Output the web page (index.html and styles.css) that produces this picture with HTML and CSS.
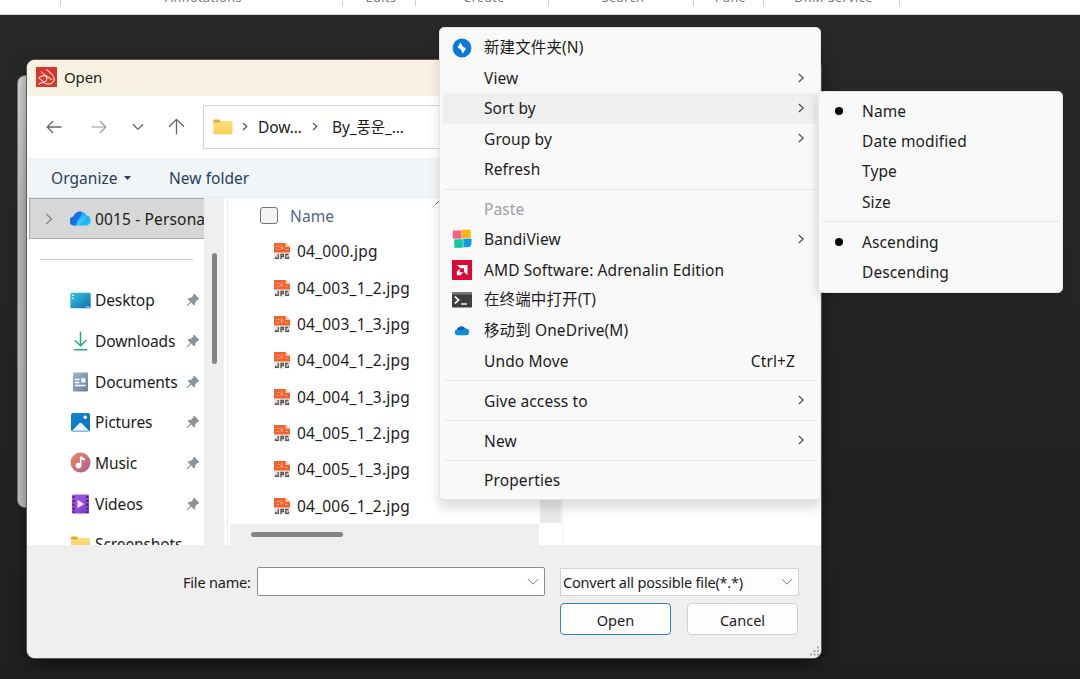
FILE: index.html
```html
<!DOCTYPE html>
<html lang="en">
<head>
<meta charset="utf-8">
<title>Open</title>
<link rel="stylesheet" href="styles.css">
</head>
<body>
<svg width="0" height="0" class="defs" aria-hidden="true">
  <defs>
    <linearGradient id="gFolder" x1="0" y1="0" x2="0" y2="1"><stop offset="0" stop-color="#ffdf82"/><stop offset="1" stop-color="#f8cb52"/></linearGradient>
    <linearGradient id="gDesk" x1="0" y1="0" x2="1" y2="1"><stop offset="0" stop-color="#34cdda"/><stop offset="1" stop-color="#1468b4"/></linearGradient>
    <linearGradient id="gDoc" x1="0" y1="0" x2="1" y2="1"><stop offset="0" stop-color="#a5b7c9"/><stop offset="1" stop-color="#62809e"/></linearGradient>
    <linearGradient id="gPic" x1="0" y1="0" x2="1" y2="1"><stop offset="0" stop-color="#1489d2"/><stop offset="1" stop-color="#0a6ebb"/></linearGradient>
    <linearGradient id="gMus" x1="0" y1="0" x2="1" y2="1"><stop offset="0" stop-color="#f08a55"/><stop offset="1" stop-color="#b0589c"/></linearGradient>
    <linearGradient id="gVid" x1="0" y1="0" x2="1" y2="1"><stop offset="0" stop-color="#a855ea"/><stop offset="1" stop-color="#7b3cc8"/></linearGradient>
    <linearGradient id="gCloud" x1="0" y1="0" x2="1" y2="1"><stop offset="0" stop-color="#2aa5f5"/><stop offset="1" stop-color="#16c0fb"/></linearGradient>
    <symbol id="pin" viewBox="0 0 14 14"><path d="M8.3.8 13.2 5.700 12.500 6.900 11.300 7 9.300 9.300 9.200 11.500 8 12.400 5.200 9.600 1.300 13.300.6 12.600 4.300 8.700 1.600 6 2.700 4.900 5 4.700 7.200 2.600 7.300 1.300Z" fill="#8c9499"/></symbol>
    <symbol id="chev" viewBox="0 0 8 10"><path d="M1.800 1 6.200 5 1.800 9" fill="none" stroke="#444" stroke-width="1.100"/></symbol>
    <symbol id="down" viewBox="0 0 12 8"><path d="M1.200 1.300 6 6.200 10.800 1.300" fill="none" stroke="#777" stroke-width="1"/></symbol>
    <symbol id="folder" viewBox="0 0 20 16"><path d="M.5 1.500Q.5.500 1.500.500H6L8 2.500H11V5H.5Z" fill="#e3a82c"/><path d="M.5 3.500H6L8 2H18.500Q19.500 2 19.500 3V14Q19.500 15.300 18.500 15.300H1.500Q.5 15.300.5 14Z" fill="url(#gFolder)"/></symbol>
    <symbol id="jpg" viewBox="0 0 18 18"><path d="M1 1H13L17 5V17.500H1Z" fill="#e9e7e6"/><path d="M1 1H12.500L17 5V10.500H1Z" fill="#f2642d"/><path d="M12.500 1V5H17Z" fill="#f9c4ad"/><path d="M3.500 4.500H7M8.500 3V8M7 6H11M12 7.500H15M3.500 7.500H6" stroke="#f99a74" stroke-width="1.200" fill="none"/><path d="M5.200 12V16.300H2.700V14.800M8 17.200V12.500H10.300V14.700H8M15.500 12.500H12.800V16.300H15.300V14.500" stroke="#54504f" stroke-width="1.300" fill="none"/></symbol>
  </defs>
</svg>

<header class="ribbon">
  <div class="group g0"></div>
  <div class="group g1">Annotations</div>
  <div class="group g2">Edits</div>
  <div class="group g3">Create</div>
  <div class="group g4">Search</div>
  <div class="group g5">Pane</div>
  <div class="group g6">DRM Service</div>
</header>

<main class="desktop">
  <div class="back-window"></div>

  <section class="dialog">
    <div class="titlebar">
      <svg width="21" height="20" viewBox="0 0 21 20"><rect width="21" height="20" fill="#d7372b"/><path d="M2.500 17.500C4.500 15 6 16 8.500 15C11.500 13.700 12 9.500 8.500 9C5.500 8.600 3 10 3 11.500C4.500 11.500 6.500 14.500 9 16.200C12 18 16.500 17 18 13.500C19.300 10 16 6.500 10.500 2.500M5 4.500C8 8.500 12.500 9.500 15.800 13" fill="none" stroke="#fbd3ca" stroke-width="1.200"/></svg>
      <span>Open</span>
    </div>

    <div class="nav">
      <svg class="back" width="16" height="14" viewBox="0 0 16 14"><path d="M15.500 7H1.200M7 1 1.200 7 7 13" fill="none" stroke="#666" stroke-width="1.300"/></svg>
      <svg class="fwd" width="16" height="14" viewBox="0 0 16 14"><path d="M.5 7H14.800M9 1 14.800 7 9 13" fill="none" stroke="#999" stroke-width="1.200"/></svg>
      <svg class="recent" width="12" height="8"><path d="M1 1.200 6 6.400 11 1.200" fill="none" stroke="#666" stroke-width="1.300"/></svg>
      <svg class="up" width="17" height="17" viewBox="0 0 17 17"><path d="M8.500 16.500V1.300M1 8.700 8.500 1.300 16 8.700" fill="none" stroke="#666" stroke-width="1.300"/></svg>
      <div class="address">
        <svg width="20" height="16"><use href="#folder"/></svg>
        <svg class="sep1" width="6" height="9"><path d="M1 1 4.800 4.500 1 8" fill="none" stroke="#555" stroke-width="1.200"/></svg>
        <span class="crumb1">Dow...</span>
        <svg class="sep2" width="6" height="9"><path d="M1 1 4.800 4.500 1 8" fill="none" stroke="#555" stroke-width="1.200"/></svg>
        <span class="crumb2">By_풍운_...</span>
      </div>
    </div>

    <div class="toolbar">
      <span class="organize">Organize</span>
      <svg width="7" height="4"><path d="M0 0H7L3.500 4Z" fill="#27405f"/></svg>
      <span class="newfolder">New folder</span>
    </div>

    <div class="content">
      <aside class="sidebar">
        <div class="account">
          <svg class="expand" width="8" height="12"><path d="M1.200 1 6.600 6 1.200 11" fill="none" stroke="#858585" stroke-width="1.300"/></svg>
          <svg width="21" height="15" viewBox="0 0 21 15"><path d="M4.500 14.500A4.500 4.500 0 0 1 3.500 5.500C4.500 2 7.500.4 10.500.4C13.500.4 15.800 2 16.600 4.600A5 5 0 0 1 16 14.500Z" fill="url(#gCloud)"/><path d="M4.500 14.500A4.500 4.500 0 0 1 3.500 5.500C4.500 2 7.500.4 10.500.4Q12 1.500 11.500 4Q10.500 6 8 8.500Q6 11 5.800 14.500Z" fill="#1d6fdc"/><path d="M7.500 14.500Q8 9 13.500 5.500L16.500 4.600Q14 10 9.500 14.500Z" fill="#63cdfb" opacity=".5"/></svg>
          <span>0015 - Persona</span>
        </div>
        <div class="rule"></div>
        <ul class="places">
          <li><svg class="ic" width="21" height="17" viewBox="0 0 21 17"><rect x=".3" y=".8" width="20.400" height="15.400" rx="1.500" fill="url(#gDesk)"/><path d="M2 3.300H4M2 6.300H4M16 14.800H17.500M18.300 14.800H19.500" stroke="#d9fbff" stroke-width="1.300"/></svg><span>Desktop</span><svg class="pin" width="14" height="14"><use href="#pin"/></svg></li>
          <li><svg class="ic" width="21" height="20" viewBox="0 0 21 20"><path d="M10.500 .8V14.500M4.800 9.300 10.500 14.800 16.200 9.300M4 18.700H17.300" fill="none" stroke="#23aa8d" stroke-width="1.500"/></svg><span>Downloads</span><svg class="pin" width="14" height="14"><use href="#pin"/></svg></li>
          <li><svg class="ic" width="21" height="20" viewBox="0 0 21 20"><rect x="3" y=".5" width="15" height="19" rx="1.300" fill="url(#gDoc)"/><path d="M5 7.500H9.500M5 10.500H9.500M5 13.500H15.500" stroke="#fff" stroke-width="1.300"/><rect x="11.300" y="6.300" width="4.200" height="4.200" fill="#fff"/></svg><span>Documents</span><svg class="pin" width="14" height="14"><use href="#pin"/></svg></li>
          <li><svg class="ic" width="21" height="20" viewBox="0 0 21 20"><rect x="1" y="1" width="19" height="18.500" rx="1.800" fill="url(#gPic)"/><path d="M2 18.800 9.300 11.300Q10.500 10.300 11.700 11.300L19 18.800Z" fill="#eef8ff"/><circle cx="15.200" cy="5.200" r="1.700" fill="#fff"/></svg><span>Pictures</span><svg class="pin" width="14" height="14"><use href="#pin"/></svg></li>
          <li><svg class="ic" width="21" height="21" viewBox="0 0 21 21"><circle cx="10.500" cy="10.500" r="10" fill="url(#gMus)"/><circle cx="8.500" cy="13.500" r="2.900" fill="#fff"/><path d="M9.900 13.500V4.500H11.300L15 6.500V8.700L11.400 7.600V13.500Z" fill="#fff"/></svg><span>Music</span><svg class="pin" width="14" height="14"><use href="#pin"/></svg></li>
          <li><svg class="ic" width="21" height="20" viewBox="0 0 21 20"><rect x="2" y=".5" width="17" height="19" rx="1.300" fill="url(#gVid)"/><path d="M3.700 2V19M17.300 2V19" stroke="#40217d" stroke-width="2" stroke-dasharray="2 1.900"/><path d="M7.500 5.800 14.200 10 7.500 14.200Z" fill="#f4e8ff"/></svg><span>Videos</span><svg class="pin" width="14" height="14"><use href="#pin"/></svg></li>
          <li><svg class="ic" width="21" height="16" viewBox="0 0 20 16"><use href="#folder"/></svg><span>Screenshots</span></li>
        </ul>
      </aside>
      <div class="vscroll"><div class="thumb"></div></div>
      <div class="files">
        <div class="file-head"><i class="check"></i><span>Name</span><svg class="sortmark" width="5" height="5"><path d="M.5 4.500 4.500.500" stroke="#555"/></svg></div>
        <ul class="file-list">
          <li><svg width="18" height="18"><use href="#jpg"/></svg><span>04_000.jpg</span></li>
          <li><svg width="18" height="18"><use href="#jpg"/></svg><span>04_003_1_2.jpg</span></li>
          <li><svg width="18" height="18"><use href="#jpg"/></svg><span>04_003_1_3.jpg</span></li>
          <li><svg width="18" height="18"><use href="#jpg"/></svg><span>04_004_1_2.jpg</span></li>
          <li><svg width="18" height="18"><use href="#jpg"/></svg><span>04_004_1_3.jpg</span></li>
          <li><svg width="18" height="18"><use href="#jpg"/></svg><span>04_005_1_2.jpg</span></li>
          <li><svg width="18" height="18"><use href="#jpg"/></svg><span>04_005_1_3.jpg</span></li>
          <li><svg width="18" height="18"><use href="#jpg"/></svg><span>04_006_1_2.jpg</span></li>
        </ul>
        <div class="hscroll"><div class="hthumb"></div></div>
      </div>
      <div class="list-scroll"></div>
      <div class="preview"></div>
    </div>

    <div class="footer">
      <div class="frow">
        <label>File name:</label>
        <div class="filename"><svg width="12" height="8"><use href="#down"/></svg></div>
        <div class="filter"><span>Convert all possible file(*.*)</span><svg width="12" height="8"><use href="#down"/></svg></div>
      </div>
      <div class="buttons">
        <div class="btn primary">Open</div>
        <div class="btn">Cancel</div>
      </div>
      <svg class="grip" width="10" height="10"><path d="M8 1.500h2M4.500 5h2M8 5h2M1 8.500h2M4.500 8.500h2M8 8.500h2" stroke="#aaa" stroke-width="2"/></svg>
    </div>
  </section>

  <nav class="menu context">
    <div class="item"><svg class="mi" width="20" height="20" viewBox="0 0 20 20"><circle cx="10" cy="10" r="9.400" fill="#0c79d8"/><path d="M8.500 4.200 5.700 9.500 8.900 11.500 10.800 15.800 14 10.500 10.800 8.500Z" fill="#fff"/></svg><span class="cjk">新建文件夹(N)</span></div>
    <div class="item"><i class="mi"></i><span>View</span><svg class="arrow" width="8" height="10"><use href="#chev"/></svg></div>
    <div class="item hover"><i class="mi"></i><span>Sort by</span><svg class="arrow" width="8" height="10"><use href="#chev"/></svg></div>
    <div class="item"><i class="mi"></i><span>Group by</span><svg class="arrow" width="8" height="10"><use href="#chev"/></svg></div>
    <div class="item"><i class="mi"></i><span>Refresh</span></div>
    <div class="divider"></div>
    <div class="item disabled"><i class="mi"></i><span>Paste</span></div>
    <div class="item"><svg class="mi" width="20" height="20" viewBox="0 0 20 20"><path d="M.8 1.500H9.500V9.700H.8Z" fill="#fb5e86"/><path d="M10 .7H18.700V9.300H10Z" fill="#fdb90b"/><path d="M2.300 10.300H10.800V18.800H2.300Z" fill="#12c99b"/><path d="M11.300 9.800H19.500V14Q19.500 18.300 15 18.300H11.300Z" fill="#1397e4"/></svg><span>BandiView</span><svg class="arrow" width="8" height="10"><use href="#chev"/></svg></div>
    <div class="item"><svg class="mi" width="20" height="20" viewBox="0 0 20 20"><rect width="20" height="20" fill="#d90a35"/><path d="M5 5H15.500V15.300L12 12V8.300H8.300ZM4.800 11.500 7.700 8.700V12.300H11.300L8.500 15.200H4.800Z" fill="#fff"/></svg><span>AMD Software: Adrenalin Edition</span></div>
    <div class="item"><svg class="mi" width="20" height="20" viewBox="0 0 20 20"><rect y="2" width="20" height="15.500" rx="1" fill="#3d3d3d"/><path d="M0 3Q0 2 1 2H19Q20 2 20 3V4.500H0Z" fill="#777"/><path d="M2.800 6.500 6.700 10 2.800 13.500M9 14H15" fill="none" stroke="#eee" stroke-width="1.700"/></svg><span class="cjk">在终端中打开(T)</span></div>
    <div class="item"><svg class="mi" width="20" height="20" viewBox="0 0 20 20"><path d="M5.500 14.300A3 3 0 0 1 5 8.400C6.300 5.300 10.800 4 13.400 7.600A3.400 3.400 0 0 1 14.500 14.300Z" fill="#128cdf"/><path d="M5 8.400C6.300 5.300 10.800 4 13.400 7.600L10 9.500Z" fill="#0863b5"/></svg><span class="cjk">移动到 OneDrive(M)</span></div>
    <div class="item"><i class="mi"></i><span>Undo Move</span><span class="key">Ctrl+Z</span></div>
    <div class="divider"></div>
    <div class="item"><i class="mi"></i><span>Give access to</span><svg class="arrow" width="8" height="10"><use href="#chev"/></svg></div>
    <div class="divider"></div>
    <div class="item"><i class="mi"></i><span>New</span><svg class="arrow" width="8" height="10"><use href="#chev"/></svg></div>
    <div class="divider"></div>
    <div class="item"><i class="mi"></i><span>Properties</span></div>
  </nav>

  <nav class="menu submenu">
    <div class="item"><i class="dot on"></i><span>Name</span></div>
    <div class="item"><i class="dot"></i><span>Date modified</span></div>
    <div class="item"><i class="dot"></i><span>Type</span></div>
    <div class="item"><i class="dot"></i><span>Size</span></div>
    <div class="divider"></div>
    <div class="item"><i class="dot on"></i><span>Ascending</span></div>
    <div class="item"><i class="dot"></i><span>Descending</span></div>
  </nav>
</main>
</body>
</html>
```
FILE: styles.css
```css
* { box-sizing: border-box; }
body {
  margin: 0; width: 1080px; height: 679px; overflow: hidden;
  display: flex; flex-direction: column;
  background: #272727; color: #1c1c1c;
  font: 15.500px/20px "Noto Sans", "Noto Sans CJK SC", "Noto Sans CJK KR", sans-serif;
  letter-spacing: -0.1px;
}
.defs { position: absolute; }
svg { display: block; flex: none; }
ul { list-style: none; margin: 0; padding: 0; }
span, label { white-space: nowrap; }

.ribbon {
  height: 15px; flex: none; display: flex; background: #fff; overflow: hidden;
  border-bottom: 1px solid #d6d6d6; font-size: 12.500px; line-height: 16px; color: #777; letter-spacing: 0.5px;
}
.group {
  height: 6px; border-right: 1px solid #cfcfcf; padding-left: 4px; white-space: nowrap;
  display: flex; justify-content: center; align-items: flex-end;
}
.g0 { width: 61px; } .g1 { width: 282px; } .g2 { width: 73px; } .g3 { width: 133px; }
.g4 { width: 145px; } .g5 { width: 70px; } .g6 { width: 136px; }

.desktop { flex: 1; position: relative; background: linear-gradient(#282828, #202020); }
.back-window {
  position: absolute; left: 17px; top: 60px; width: 40px; height: 433px;
  border-radius: 8px; background: linear-gradient(#dcdcdc, #c2c2c2 30%, #c4c4c4);
  border: 1px solid #777;
}
.dialog {
  position: absolute; left: 27px; top: 45px; width: 794px; height: 598px;
  display: flex; flex-direction: column; overflow: hidden;
  border-radius: 8px; background: #fff; box-shadow: 0 0 0 1px #5b5b5b, 0 6px 16px rgba(0,0,0,.5);
}
.titlebar {
  height: 36px; flex: none; display: flex; align-items: center; gap: 7px; padding: 0 0 2px 9px;
  background: linear-gradient(90deg, #f7f2e2, #faf0e6 50%, #faefe6);
}
.titlebar span { font-size: 15px; }
.nav { height: 62px; flex: none; display: flex; align-items: center; padding: 0 0 1px 19px; }
.fwd { margin-left: 29px; }
.recent { margin-left: 25px; }
.up { margin-left: 24px; }
.address {
  margin-left: 18px; flex: 1; height: 44px; border: 1px solid #d4d4d4;
  display: flex; align-items: center; padding-left: 9px;
}
.sep1 { margin-left: 9px; }
.crumb1 { margin-left: 10px; width: 52px; }
.crumb2 { margin-left: 14px; }
.sep2 { margin-left: 2px; }
.toolbar {
  height: 40px; flex: none; display: flex; align-items: center; padding-left: 24px;
  background: #f2f5f7; border-bottom: 1px solid #e8ebed; color: #27405f; letter-spacing: 0.05px;
}
.organize { width: 67px; margin-right: 6px; }
.newfolder { margin-left: 38px; }

.content { height: 347px; flex: none; display: flex; background: #fff; }
.sidebar { width: 177px; padding-left: 2px; overflow: hidden; }
.account {
  height: 41px; width: 190px; display: flex; align-items: center; letter-spacing: 0.15px;
  border: 1px solid #a6a6a6; background: #d7d7d7; padding-left: 15px;
}
.account svg + svg { margin: 0 4px 0 17px; }
.rule { height: 1px; background: #c9c9c9; margin: 20px 11px 20px 11px; }
.places li { height: 40.650px; display: flex; align-items: center; padding-left: 41px; }
.places span { margin-left: 4px; width: 91px; }
.vscroll { width: 20px; background: #efefef; padding: 55px 0 0 8px; }
.thumb { width: 5px; height: 111px; border-radius: 3px; background: #858585; }
.files { width: 312px; margin-left: 3px; border-left: 1px solid #ededed; display: flex; flex-direction: column; }
.file-head { height: 35px; display: flex; align-items: center; padding-left: 32px; color: #506785; letter-spacing: 0.1px; }
.check { width: 18px; height: 17px; border: 1px solid #757575; border-radius: 3px; background: #f3f3f3; margin-right: 12px; }
.file-head span { width: 44px; }
.sortmark { margin: -26px 0 0 101px; }
.file-list { flex: 1; letter-spacing: 0.220px; }
.file-list li { height: 36.350px; display: flex; align-items: center; padding-left: 45px; gap: 6px; }
.hscroll { height: 21px; margin-left: 2px; background: #efefef; padding: 8px 0 0 21px; }
.hthumb { width: 92px; height: 5px; border-radius: 3px; background: #858585; }
.list-scroll { width: 21px; height: 325px; background: #e9e9e9; margin-left: 1px; }
.preview { flex: 1; margin-left: 1px; border-left: 1px solid #f3f3f3; }

.footer { flex: 1; background: #efefef; padding-top: 22px; position: relative; font-size: 14.500px; letter-spacing: -0.2px; }
.frow { display: flex; align-items: center; padding-left: 156px; }
.frow label { width: 74px; }
.filename {
  width: 288px; height: 29px; background: #fff; border: 1px solid #8b8b8b; border-radius: 2px;
  display: flex; align-items: center; justify-content: flex-end; padding-right: 5px;
}
.filter {
  margin-left: 15px; width: 239px; height: 28px; background: #fdfdfd; border: 1px solid #d2d2d2;
  display: flex; align-items: center; justify-content: space-between; padding: 0 5px 0 2px;
}
.buttons { display: flex; gap: 16px; padding: 7px 0 0 533px; letter-spacing: 0; }
.btn {
  width: 111px; height: 32px; border: 1px solid #d0d0d0; border-radius: 4px; background: #fdfdfd;
  display: flex; align-items: center; justify-content: center; padding-top: 1px;
}
.primary { border-color: #3183c8; }
.grip { position: absolute; right: 2px; bottom: 2px; }

.menu {
  position: absolute; background: #f9f9f9; border: 1px solid #e4e4e4; border-radius: 5px;
  padding: 4.500px 3px; box-shadow: 0 8px 12px rgba(0,0,0,.14); letter-spacing: 0.110px;
}
.context { left: 439px; top: 12px; width: 382px; height: 473px; }
.submenu { left: 818px; top: 76px; width: 245px; height: 202px; padding-top: 3.500px; box-shadow: -2px 4px 8px rgba(0,0,0,.12); }
.item { height: 30.400px; display: flex; align-items: center; padding: 0 12px 0 9px; }
.mi { width: 20px; margin-right: 12px; }
.hover { background: #efefef; }
.disabled { color: #a0a0a0; }
.cjk { font-size: 15.500px; margin-top: -2px; }
.arrow { margin-left: auto; margin-top: -1px; }
.key { margin-left: auto; margin-right: 10px; }
.divider { height: 1px; background: #e7e7e7; margin: 4.200px 0; }
.dot { width: 8px; height: 8px; border-radius: 50%; margin: 0 19px 0 4px; }
.on { background: #000; }
```
